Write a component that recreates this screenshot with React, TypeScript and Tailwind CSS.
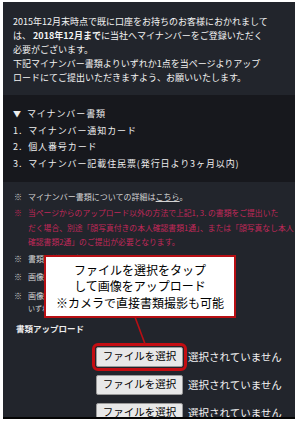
import React from "react";

const jp = { fontFamily: '"Noto Sans CJK JP", "Noto Sans", sans-serif' };

function FileRow({ highlight }: { highlight?: boolean }) {
  return (
    <div className="flex items-center pl-[82px]">
      <button
        className={
          "h-[20px] w-[87px] rounded-[2px] border border-[#9a9a9a] bg-[#e8e8e8] text-[10.5px] leading-none text-black " +
          (highlight ? "outline-[3px] outline-solid outline-[#c40d12] outline-offset-[1px]" : "")
        }
      >
        ファイルを選択
      </button>
      <span className="ml-[5px] whitespace-nowrap text-[10.5px] text-[#f2f2f2]">選択されていません</span>
    </div>
  );
}

function Note({ children, className = "" }: { children: React.ReactNode; className?: string }) {
  return (
    <div className={"flex " + className}>
      <span className="w-[14px] shrink-0">※</span>
      <div>{children}</div>
    </div>
  );
}

export default function App() {
  return (
    <div className="h-[423px] w-[298px] overflow-hidden bg-white pl-[3px] pr-[3px] pt-[2px]" style={jp}>
      <div className="relative flex h-[417px] flex-col overflow-hidden bg-[#22252c]">
        {/* intro */}
        <div className="h-[93px] shrink-0 px-[10px] pt-[13px] text-[9px] leading-[14px] text-[#f3f3f3]">
          <p className="whitespace-nowrap">2015年12月末時点で既に口座をお持ちのお客様におかれまして</p>
          <p className="whitespace-nowrap">
            は、 <b>2018年12月まで</b>に当社へマイナンバーをご登録いただく
          </p>
          <p className="whitespace-nowrap">必要がございます。</p>
          <p className="whitespace-nowrap">下記マイナンバー書類よりいずれか1点を当ページよりアップ</p>
          <p className="whitespace-nowrap">ロードにてご提出いただきますよう、お願いいたします。</p>
        </div>

        {/* document list */}
        <div className="h-[87px] shrink-0 bg-[#17181d] px-[10px] pt-[11px] text-[9px] leading-[16.5px] tracking-[0.9px] text-[#ededed]">
          <p>
            <span className="mr-[5px] text-[8px]">▼</span>マイナンバー書類
          </p>
          <p>1. &nbsp;マイナンバー通知カード</p>
          <p>2. &nbsp;個人番号カード</p>
          <p>3. &nbsp;マイナンバー記載住民票(発行日より3ヶ月以内)</p>
        </div>

        {/* notes + upload */}
        <div className="flex-1 px-[11px] pt-[8px] text-[8px] leading-[14px] text-[#d4d4d4]">
          <Note>
            マイナンバー書類についての詳細は<span className="underline">こちら</span>。
          </Note>
          <Note className="mt-[2px] text-[7.8px] leading-[14.5px] text-[#c2285a]">
            <p className="whitespace-nowrap">当ページからのアップロード以外の方法で上記1, 3. の書類をご提出いた</p>
            <p className="whitespace-nowrap">だく場合、別途「顔写真付きの本人確認書類1通」、または「顔写真なし本人</p>
            <p className="whitespace-nowrap">確認書類2通」のご提出が必要となります。</p>
          </Note>
          <Note className="mt-[2px]">書類を鮮明に撮影してください。</Note>
          <Note className="mt-[4px]">画像ファイルは1点10MBまでです。</Note>
          <Note className="mt-[5px]">
            <p className="whitespace-nowrap">画像のファイル形式はjpg・jpeg・png・gif・heic、 の</p>
            <p className="-mt-[2px] whitespace-nowrap text-[7px]">いずれかでアップロードしてください。</p>
          </Note>
          <p className="mt-[6px] pl-[2px] text-[8.5px] font-bold text-[#ececec]">書類アップロード</p>
          <div className="mt-[12px] flex flex-col gap-[8px]">
            <FileRow highlight />
            <FileRow />
            <FileRow />
          </div>
        </div>

        <div className="absolute bottom-0 left-0 h-[2px] w-full bg-[#050505]" />

        {/* callout */}
        <svg className="absolute left-0 top-0" width="292" height="417">
          <line x1="132" y1="315" x2="142" y2="342" stroke="#b80f14" strokeWidth="1.6" />
        </svg>
        <div className="absolute left-[41px] top-[253px] flex h-[63px] w-[192px] flex-col items-center justify-center border-2 border-[#b80f14] bg-white text-[12px] leading-[16.5px] text-black">
          <p>ファイルを選択をタップ</p>
          <p>して画像をアップロード</p>
          <p>※カメラで直接書類撮影も可能</p>
        </div>
      </div>
    </div>
  );
}
